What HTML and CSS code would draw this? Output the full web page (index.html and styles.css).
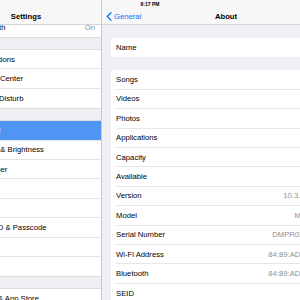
FILE: index.html
```html
<!DOCTYPE html>
<html lang="en">
<head>
  <meta charset="UTF-8" />
  <meta name="viewport" content="width=device-width, initial-scale=1.0"/>
  <title>Settings | About</title>
  <link rel="stylesheet" href="styles.css">
</head>
<body>
  <div class="status">8:17 PM</div>

  <div class="split">
    <aside class="master">
      <header class="nav">
        <span class="nav-title">Settings</span>
      </header>

      <div class="list">
        <section class="group">
          <div class="cell"><span class="label">Bluetooth</span><span class="value">On</span></div>
        </section>

        <section class="group">
          <div class="cell"><span class="label">Notifications</span></div>
          <div class="cell"><span class="label">Control Center</span></div>
          <div class="cell"><span class="label">Do Not Disturb</span></div>
        </section>

        <section class="group">
          <div class="cell selected"><span class="label">General</span></div>
          <div class="cell"><span class="label">Display &amp; Brightness</span></div>
          <div class="cell"><span class="label">Wallpaper</span></div>
          <div class="cell"><span class="label">Sounds</span></div>
          <div class="cell"><span class="label">Siri</span></div>
          <div class="cell"><span class="label">Touch ID &amp; Passcode</span></div>
          <div class="cell"><span class="label">Battery</span></div>
          <div class="cell"><span class="label">Privacy</span></div>
        </section>

        <section class="group">
          <div class="cell"><span class="label">iTunes &amp; App Store</span></div>
          <div class="cell"><span class="label">Wallet &amp; Apple Pay</span></div>
        </section>
      </div>
    </aside>

    <main class="detail">
      <header class="nav nav-detail">
        <a class="back" href="#">
          <svg width="6" height="9" viewBox="0 0 6 9">
            <path d="M5 0.7 L1.2 4.5 L5 8.3" fill="none" stroke="#007aff" stroke-width="1.3" stroke-linecap="round" stroke-linejoin="round"/>
          </svg>
          General
        </a>
        <span class="nav-title">About</span>
        <span></span>
      </header>

      <section class="card">
        <div class="row"><div class="row-inner"><span>Name</span><span class="value">iPad</span></div></div>
      </section>

      <section class="card">
        <div class="row"><div class="row-inner"><span>Songs</span><span class="value">0</span></div></div>
        <div class="row"><div class="row-inner"><span>Videos</span><span class="value">0</span></div></div>
        <div class="row"><div class="row-inner"><span>Photos</span><span class="value">0</span></div></div>
        <div class="row"><div class="row-inner"><span>Applications</span><span class="value">9</span></div></div>
        <div class="row"><div class="row-inner"><span>Capacity</span><span class="value">32 GB</span></div></div>
        <div class="row"><div class="row-inner"><span>Available</span><span class="value">19 GB</span></div></div>
        <div class="row"><div class="row-inner"><span>Version</span><span class="value">10.3.3 (14G60)</span></div></div>
        <div class="row"><div class="row-inner"><span>Model</span><span class="value">MP2F2LL/A</span></div></div>
        <div class="row"><div class="row-inner"><span>Serial Number</span><span class="value">DMPR0X4KGXQ7</span></div></div>
        <div class="row"><div class="row-inner"><span>Wi-Fi Address</span><span class="value">84:89:AD:4F:5A:2C</span></div></div>
        <div class="row"><div class="row-inner"><span>Bluetooth</span><span class="value">84:89:AD:4F:5A:2D</span></div></div>
        <div class="row"><div class="row-inner"><span>SEID</span><span class="value"></span></div></div>
      </section>
    </main>
  </div>
</body>
</html>
```

FILE: styles.css
```css
body {
  margin: 0;
  width: 300px;
  height: 300px;
  overflow: hidden;
  background: #efeff4;
  font-family: 'Liberation Sans', Arial, sans-serif;
  font-size: 7.7px;
  color: #000;
  position: relative;
}

/* status bar sits over both nav bars */
.status {
  position: absolute;
  top: 1px;
  left: 0;
  right: 0;
  z-index: 5;
  text-align: center;
  font-size: 5px;
  font-weight: bold;
  line-height: 6px;
}

.split {
  display: flex;
  height: 300px;
  margin-left: -49px;
}

.master {
  flex: 0 0 150px;
  border-right: 1px solid #c9c9ce;
  overflow: hidden;
}

.detail {
  flex: 0 0 248px;
  overflow: hidden;
}

.nav {
  position: relative;
  z-index: 2;
  height: 25px;
  box-sizing: border-box;
  padding-top: 8px;
  background: #f7f7f7;
  border-bottom: 1px solid #d4d4d8;
  display: flex;
  align-items: center;
  justify-content: center;
}

.nav-title {
  font-weight: bold;
}

.nav-detail {
  display: grid;
  grid-template-columns: 1fr auto 1fr;
}

.back {
  justify-self: start;
  display: flex;
  align-items: center;
  gap: 2px;
  padding-left: 4px;
  color: #007aff;
  text-decoration: none;
}

/* master list, scrolled a little under the nav bar */
.list {
  margin-top: -8.4px;
}

.group {
  background: #fff;
  border-top: 1px solid #dcdce0;
  border-bottom: 1px solid #dcdce0;
  margin-bottom: 11px;
}

.cell {
  height: 19.4px;
  box-sizing: border-box;
  padding: 0 6px 0 22px;
  display: flex;
  align-items: center;
  justify-content: space-between;
  border-bottom: 1px solid #e4e4e7;
}

.cell:last-child {
  border-bottom: none;
}

.cell.selected {
  background: #4f96f4;
  color: #fff;
}

.value {
  color: #8e8e93;
}

/* detail cards */
.card {
  background: #fff;
  margin: 13px 9px 0;
  border-radius: 3px;
  padding-left: 5px;
}

.row-inner {
  height: 19.4px;
  box-sizing: border-box;
  padding-right: 6px;
  display: flex;
  align-items: center;
  justify-content: space-between;
  border-bottom: 1px solid #e6e6e9;
}

.row:last-child .row-inner {
  border-bottom: none;
}
```
